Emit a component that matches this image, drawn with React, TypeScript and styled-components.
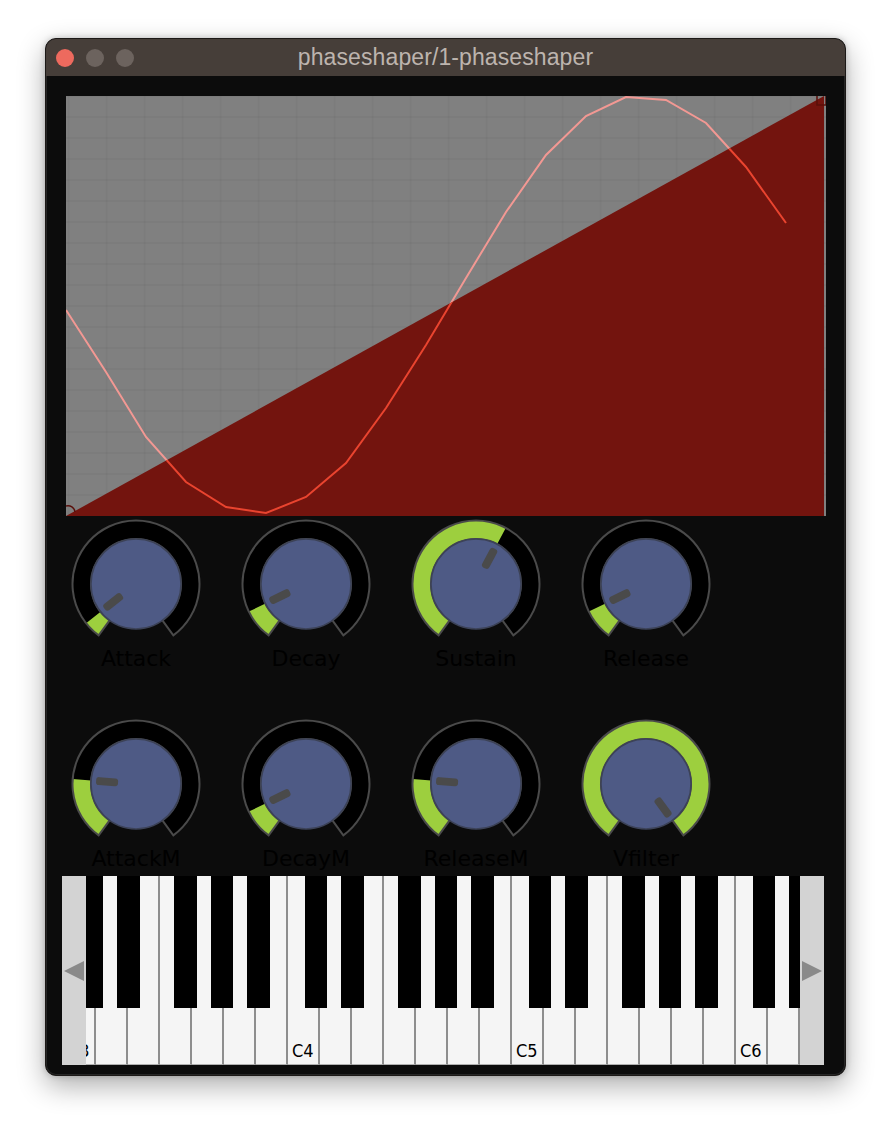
import React from 'react';
import styled, { createGlobalStyle } from 'styled-components';

const Global = createGlobalStyle`
  html, body { margin: 0; padding: 0; background: #ffffff; }
  body { font-family: "Liberation Sans", Arial, sans-serif; }
`;

const Page = styled.div`
  width: 892px;
  height: 1130px;
  box-sizing: border-box;
  padding: 38px 0 0 45px;
`;

const Window = styled.div`
  width: 801px;
  box-sizing: border-box;
  border: 1px solid #1c1917;
  border-radius: 11px;
  overflow: hidden;
  background: #0c0c0c;
  box-shadow: 0 0 0 1px rgba(90, 90, 90, 0.35) inset, 0 10px 28px rgba(0, 0, 0, 0.32), 0 0 6px rgba(0, 0, 0, 0.2);
`;

const TitleBar = styled.div`
  height: 37px;
  background: #463e39;
  display: flex;
  align-items: center;
`;

const Lights = styled.div`
  width: 88px;
  box-sizing: border-box;
  padding-left: 10px;
  display: flex;
  gap: 12px;
`;

const Light = styled.span<{ $color: string }>`
  width: 18px;
  height: 18px;
  border-radius: 50%;
  background: ${(p) => p.$color};
`;

const Title = styled.div`
  flex: 1;
  text-align: center;
  color: #bdb4ae;
  font-family: "Liberation Sans", Arial, sans-serif;
  font-size: 23px;
  letter-spacing: 0.1px;
`;

const Spacer = styled.div`
  width: 88px;
`;

const Content = styled.div`
  display: flex;
  flex-direction: column;
  align-items: flex-start;
  padding: 20px 0 10px 16px;
`;

const PlotSvg = styled.svg`
  display: block;
  margin-left: 4px;
  width: 760px;
  height: 420px;
`;

const KnobGrid = styled.div`
  margin: 3px 0 0 9px;
  display: grid;
  grid-template-columns: repeat(4, 130px);
  grid-auto-rows: 152px;
  column-gap: 40px;
  row-gap: 48px;
`;

const KnobCell = styled.div`
  display: flex;
  flex-direction: column;
  align-items: center;
`;

const KnobSvg = styled.svg`
  display: block;
  width: 130px;
  height: 130px;
`;

const KnobLabel = styled.div`
  margin-top: -2px;
  height: 24px;
  line-height: 24px;
  font-family: "DejaVu Sans", Verdana, sans-serif;
  font-size: 22px;
  color: #000000;
  white-space: nowrap;
`;

const Keyboard = styled.div`
  margin-top: 5px;
  width: 762px;
  height: 189px;
  display: flex;
`;

const ScrollButton = styled.div`
  width: 24px;
  flex-shrink: 0;
  background: #d3d3d3;
  display: flex;
  align-items: center;
  justify-content: center;
`;

const KeysArea = styled.div`
  flex: 1;
  position: relative;
  overflow: hidden;
  display: flex;
`;

const WhiteRow = styled.div`
  display: flex;
  margin-left: -22px;
  height: 100%;
`;

const WhiteKey = styled.div`
  width: 32px;
  flex-shrink: 0;
  box-sizing: border-box;
  height: 100%;
  background: #f5f5f5;
  border-right: 2px solid #8e8e8e;
  border-bottom: 1px solid #b0b0b0;
  display: flex;
  align-items: flex-end;
  padding: 0 0 4px 4px;
`;

const KeyLabel = styled.span`
  font-family: "DejaVu Sans Condensed", "DejaVu Sans", sans-serif;
  font-stretch: condensed;
  font-size: 18px;
  line-height: 18px;
  color: #000;
  white-space: nowrap;
`;

const BlackKey = styled.div.attrs<{ $left: number }>((p) => ({ style: { left: `${p.$left}px` } }))<{ $left: number }>`
  position: absolute;
  top: 0;
  width: 22.5px;
  height: 132px;
  background: #000;
`;

// ---------- plot ----------
const W = 760;
const H = 420;
const FILL_W = 758;
const sinePts: [number, number][] = [
  [0, 214], [40, 276], [80, 341], [120, 386], [160, 411], [200, 417], [240, 401], [280, 367],
  [320, 312], [360, 249], [400, 182], [440, 116], [480, 59], [520, 20], [560, 1], [600, 4],
  [640, 27], [680, 71], [720, 127],
];
const pointsStr = sinePts.map((p) => p.join(',')).join(' ');

const Plot: React.FC = () => {
  const vLines = Array.from({ length: 20 }, (_, k) => 2.7 + 38 * k);
  const hLines = Array.from({ length: 20 }, (_, k) => 21 * k);
  return (
    <PlotSvg viewBox={`0 0 ${W} ${H}`}>
      <defs>
        <clipPath id="upper">
          <polygon points={`0,0 ${W},0 ${FILL_W},0 0,${H}`} />
        </clipPath>
        <clipPath id="lower">
          <polygon points={`0,${H} ${FILL_W},0 ${W},0 ${W},${H}`} />
        </clipPath>
      </defs>
      <rect x={0} y={0} width={W} height={H} fill="#808080" />
      {vLines.map((x) => (
        <line key={`v${x}`} x1={x} y1={0} x2={x} y2={H} stroke="rgba(0,0,0,0.028)" strokeWidth={2} />
      ))}
      {hLines.map((y) => (
        <line key={`h${y}`} x1={0} y1={y} x2={W} y2={y} stroke="rgba(0,0,0,0.028)" strokeWidth={2} />
      ))}
      <polygon points={`0,${H} ${FILL_W},0 ${FILL_W},${H}`} fill="#73140e" />
      <polyline points={pointsStr} fill="none" stroke="#f29893" strokeWidth={2} clipPath="url(#upper)" />
      <polyline points={pointsStr} fill="none" stroke="#e9442f" strokeWidth={2} clipPath="url(#lower)" />
      <rect x={751} y={-3} width={9} height={12} fill="none" stroke="#5a0f0a" strokeWidth={1.5} />
      <path d="M0 410 A7 7 0 0 1 9 416" fill="none" stroke="#5a0f0a" strokeWidth={1.5} />
    </PlotSvg>
  );
};

// ---------- knob ----------
const C = 65;
const R_OUT = 63.5;
const R_IN = 45;
const START = 216;
const SWEEP = 288;

const pt = (r: number, deg: number): [number, number] => {
  const a = (deg * Math.PI) / 180;
  return [C + r * Math.sin(a), C - r * Math.cos(a)];
};

const sector = (r1: number, r2: number, a0: number, a1: number) => {
  const large = a1 - a0 > 180 ? 1 : 0;
  const [x0, y0] = pt(r2, a0);
  const [x1, y1] = pt(r2, a1);
  const [x2, y2] = pt(r1, a1);
  const [x3, y3] = pt(r1, a0);
  return `M${x0} ${y0} A${r2} ${r2} 0 ${large} 1 ${x1} ${y1} L${x2} ${y2} A${r1} ${r1} 0 ${large} 0 ${x3} ${y3} Z`;
};

const Knob: React.FC<{ value: number; label: string }> = ({ value, label }) => {
  const end = START + SWEEP * value;
  const track = sector(R_IN, R_OUT, START, START + SWEEP);
  return (
    <KnobCell>
      <KnobSvg viewBox="0 0 130 130">
        <path d={track} fill="#000" />
        {value > 0.001 && <path d={sector(R_IN, R_OUT, START, end)} fill="#9dcf3e" />}
        <path d={track} fill="none" stroke="#4a4a4a" strokeWidth={2} strokeLinejoin="miter" />
        <circle cx={C} cy={C} r={R_IN} fill="#4e5a85" stroke="#3c4257" strokeWidth={1.5} />
        <rect
          x={C - 4}
          y={C - 40}
          width={8}
          height={22}
          rx={3}
          fill="#4a4a4a"
          transform={`rotate(${end} ${C} ${C})`}
        />
      </KnobSvg>
      <KnobLabel>{label}</KnobLabel>
    </KnobCell>
  );
};

const knobs = [
  { label: 'Attack', value: 0.055 },
  { label: 'Decay', value: 0.098 },
  { label: 'Sustain', value: 0.597 },
  { label: 'Release', value: 0.098 },
  { label: 'AttackM', value: 0.203 },
  { label: 'DecayM', value: 0.098 },
  { label: 'ReleaseM', value: 0.203 },
  { label: 'Vfilter', value: 1 },
];

// ---------- keyboard ----------
const WHITE_COUNT = 24;
const BLACK_POS = [0.58, 1.72, 3.51, 4.65, 5.79];
const blackKeys: number[] = [];
for (let oct = 0; oct < 4; oct++) {
  BLACK_POS.forEach((p) => {
    const left = -24 + (oct * 7 + p) * 32;
    if (left < 714) blackKeys.push(left);
  });
}

const Arrow: React.FC<{ dir: 'left' | 'right' }> = ({ dir }) => (
  <svg width="20" height="20" viewBox="0 0 20 20">
    <polygon points={dir === 'left' ? '0,10 20,0 20,20' : '20,10 0,0 0,20'} fill="#8a8a8a" />
  </svg>
);

const Piano: React.FC = () => (
  <Keyboard>
    <ScrollButton>
      <Arrow dir="left" />
    </ScrollButton>
    <KeysArea>
      <WhiteRow>
        {Array.from({ length: WHITE_COUNT }, (_, k) => (
          <WhiteKey key={k}>{k % 7 === 0 && <KeyLabel>{`C${3 + k / 7}`}</KeyLabel>}</WhiteKey>
        ))}
      </WhiteRow>
      {blackKeys.map((l) => (
        <BlackKey key={l} $left={l} />
      ))}
    </KeysArea>
    <ScrollButton>
      <Arrow dir="right" />
    </ScrollButton>
  </Keyboard>
);

export default function App() {
  return (
    <>
      <Global />
      <Page>
        <Window>
          <TitleBar>
            <Lights>
              <Light $color="#ed6a5e" />
              <Light $color="#6c635e" />
              <Light $color="#6c635e" />
            </Lights>
            <Title>phaseshaper/1-phaseshaper</Title>
            <Spacer />
          </TitleBar>
          <Content>
            <Plot />
            <KnobGrid>
              {knobs.map((k) => (
                <Knob key={k.label} label={k.label} value={k.value} />
              ))}
            </KnobGrid>
            <Piano />
          </Content>
        </Window>
      </Page>
    </>
  );
}
